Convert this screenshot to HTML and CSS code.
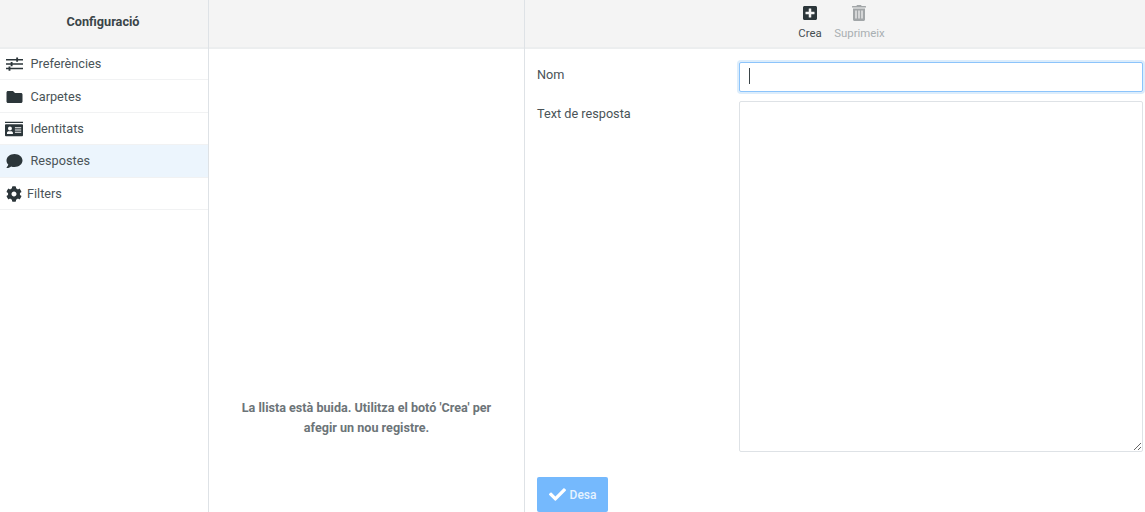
FILE: index.html
```html
<!DOCTYPE html>
<html lang="ca">
<head>
<meta charset="utf-8">
<title>Configuració</title>
<link rel="stylesheet" href="styles.css">
</head>
<body>
<div class="app">
  <aside class="col col-nav">
    <header class="head head-title">Configuració</header>
    <nav class="nav">
      <a class="nav-row"><svg class="ico" viewBox="0 0 20 16"><path d="M0 2h20v1.800H0zM0 7.200h20v1.800H0zM0 12.400h20v1.800H0z"/><path d="M12 0.400h2.200v5H12zM5.500 5.600h2.200v5H5.500zM3 10.800h2.200v5H3z"/></svg>Preferències</a>
      <a class="nav-row"><svg class="ico" viewBox="0 0 512 512"><path d="M464 128H272l-64-64H48C21.490 64 0 85.490 0 112v288c0 26.510 21.490 48 48 48h416c26.510 0 48-21.490 48-48V176c0-26.510-21.490-48-48-48z"/></svg>Carpetes</a>
      <a class="nav-row"><svg class="ico ico-id" viewBox="0 0 20 16"><path fill-rule="evenodd" d="M0 0h20v1.400H0zM1 2.600h18a1 1 0 0 1 1 1V15a1 1 0 0 1-1 1H1a1 1 0 0 1-1-1V3.600a1 1 0 0 1 1-1zM2.200 13.600h6.600v-1.300c0-1-1-1.700-2-1.700H4.200c-1 0-2 .7-2 1.700zM5.500 5.200a2.200 2.200 0 1 0 0 4.400 2.200 2.200 0 0 0 0-4.400zM11 6v1.200h7V6zM11 8.500v1.200h7V8.500zM11 11v1.200h7V11z"/></svg>Identitats</a>
      <a class="nav-row is-active"><svg class="ico" viewBox="0 0 512 512"><path d="M256 32C114.600 32 0 125.100 0 240c0 49.600 21.400 95 57 130.700C44.500 421.100 2.700 466 2.200 466.500c-2.200 2.300-2.800 5.700-1.500 8.700S4.800 480 8 480c66.300 0 116-31.800 140.600-51.400 32.700 12.300 69 19.400 107.400 19.400 141.400 0 256-93.100 256-208S397.400 32 256 32z"/></svg>Respostes</a>
      <a class="nav-row nav-row-tight"><svg class="ico ico-cog" viewBox="0 0 512 512"><path d="M487.400 315.700l-42.600-24.600c4.300-23.200 4.300-47 0-70.200l42.600-24.600c4.900-2.800 7.100-8.600 5.500-14-11.100-35.600-30-67.800-54.700-94.600-3.800-4.100-10-5.100-14.800-2.300L380.800 110c-17.900-15.400-38.500-27.300-60.800-35.100V25.800c0-5.600-3.900-10.500-9.400-11.700-36.700-8.200-74.300-7.800-109.200 0-5.500 1.200-9.400 6.100-9.400 11.700V75c-22.200 7.900-42.800 19.800-60.800 35.100L88.700 85.500c-4.900-2.800-11-1.900-14.800 2.300-24.700 26.700-43.600 58.900-54.700 94.600-1.700 5.400.6 11.200 5.500 14L67.300 221c-4.300 23.200-4.300 47 0 70.200l-42.600 24.600c-4.900 2.800-7.100 8.600-5.500 14 11.100 35.600 30 67.800 54.700 94.600 3.800 4.100 10 5.100 14.800 2.300l42.600-24.600c17.900 15.400 38.500 27.300 60.800 35.100v49.200c0 5.600 3.900 10.500 9.400 11.700 36.700 8.200 74.300 7.800 109.200 0 5.500-1.200 9.400-6.100 9.400-11.700v-49.200c22.200-7.900 42.800-19.800 60.800-35.100l42.600 24.600c4.900 2.800 11 1.900 14.800-2.300 24.700-26.700 43.600-58.900 54.700-94.600 1.500-5.500-.7-11.300-5.600-14.100zM256 336c-44.100 0-80-35.900-80-80s35.900-80 80-80 80 35.900 80 80-35.900 80-80 80z"/></svg>Filters</a>
    </nav>
  </aside>
  <section class="col col-list">
    <header class="head"></header>
    <div class="empty">La llista està buida. Utilitza el botó 'Crea' per afegir un nou registre.</div>
  </section>
  <main class="col col-form">
    <header class="head toolbar">
      <a class="tool"><svg class="tool-ico" viewBox="0 0 448 512"><path d="M400 32H48C21.500 32 0 53.500 0 80v352c0 26.500 21.500 48 48 48h352c26.500 0 48-21.500 48-48V80c0-26.500-21.500-48-48-48zm-32 252c0 6.600-5.400 12-12 12h-92v92c0 6.600-5.400 12-12 12h-56c-6.600 0-12-5.400-12-12v-92H92c-6.600 0-12-5.400-12-12v-56c0-6.600 5.400-12 12-12h92v-92c0-6.600 5.400-12 12-12h56c6.600 0 12 5.400 12 12v92h92c6.600 0 12 5.400 12 12v56z"/></svg><span>Crea</span></a>
      <a class="tool is-disabled"><svg class="tool-ico" viewBox="0 0 448 512"><path fill-rule="evenodd" d="M160 0h128l20 32h124c9 0 16 7 16 16v32H0V48c0-9 7-16 16-16h124zM32 112h384v352c0 26-22 48-48 48H80c-26 0-48-22-48-48zM108 176v256h40V176zM204 176v256h40V176zM300 176v256h40V176z"/></svg><span>Suprimeix</span></a>
    </header>
    <form class="form">
      <div class="field">
        <label class="label" for="nom">Nom</label>
        <div class="input-wrap">
          <input class="input is-focus" id="nom" type="text">
          <span class="caret"></span>
        </div>
      </div>
      <div class="field field-area">
        <label class="label" for="text">Text de resposta</label>
        <textarea class="input area" id="text"></textarea>
      </div>
      <button class="save" type="button"><svg class="save-ico" viewBox="0 0 512 512"><path d="M173.898 439.404l-166.400-166.400c-9.997-9.997-9.997-26.206 0-36.204l36.203-36.204c9.997-9.998 26.207-9.998 36.204 0L192 312.690 432.095 72.596c9.997-9.997 26.207-9.997 36.204 0l36.203 36.204c9.997 9.997 9.997 26.206 0 36.204l-294.400 294.401c-9.998 9.997-26.207 9.997-36.204-.001z"/></svg>Desa</button>
    </form>
  </main>
</div>
</body>
</html>
```
FILE: styles.css
```css
* { box-sizing: border-box; }
html, body { margin: 0; height: 100%; overflow: hidden; }
body { background: #fff; font: 12.700px/20px Roboto, sans-serif; color: #2c363a; }
.app { display: grid; grid-template-columns: 209px 316px 1fr; height: 512px; }
.col { display: flex; flex-direction: column; min-width: 0; height: 512px; border-right: 1px solid #dee2e6; }
.col-form { border-right: 0; }
.head { flex: none; height: 49px; background: #f4f4f4; border-bottom: 2px solid #eceeef; }
.head-title { display: flex; align-items: center; justify-content: center; padding: 0 2px 3px 0; font-weight: 700; color: #3a4448; }
.nav { display: flex; flex-direction: column; margin-top: -1px; }
.nav-row { display: flex; align-items: center; height: 32.400px; padding: 0.900px 0 0 6px; border-bottom: 1px solid #f1f2f3; color: #4a5357; }
.nav-row.is-active { background: #ecf5fd; }
.nav-row-tight .ico { margin-right: 5px; }
.ico { flex: none; width: 17px; height: 16px; margin-right: 7.500px; fill: #2c363a; }
.ico-id { width: 18px; margin-left: -1px; }
.ico-cog { width: 16px; margin-left: 0; }
.empty { margin-top: auto; padding: 0 20px 74px; text-align: center; font-weight: 700; font-size: 12.600px; line-height: 20px; color: #6c7478; }
.toolbar { display: flex; justify-content: center; gap: 12.500px; padding: 4px 0 0 13px; }
.tool { display: flex; flex-direction: column; align-items: center; font-size: 11.400px; line-height: 14px; color: #454e52; }
.tool-ico { width: 14px; height: 18px; margin-bottom: 4px; fill: #2c363a; }
.tool.is-disabled { color: #a9afb2; }
.tool.is-disabled .tool-ico { fill: #a2a6a8; }
.form { display: flex; flex-direction: column; flex: 1; padding: 13px 2px 0 12px; }
.field { display: grid; grid-template-columns: 202px 1fr; }
.field-area { margin-top: 9px; }
.label { padding-top: 3px; color: #4a5357; }
.input-wrap { position: relative; }
.input { display: block; width: 100%; height: 30px; margin: 0; padding: 4px 9px; border: 1px solid #dee2e6; border-radius: 2px; background: #fff; font: 13px/20px Roboto, sans-serif; color: #2c363a; outline: 0; }
.input.is-focus { border-color: #8cc4fb; box-shadow: 0 0 0 2px #dcedfc; }
.caret { position: absolute; left: 10px; top: 6px; width: 1px; height: 16px; background: #3a4448; }
.area { height: 351px; }
.save { display: flex; align-items: center; justify-content: center; align-self: flex-start; width: 71px; height: 35px; margin-top: 25px; padding: 0; border: 0; border-radius: 2px; background: #75b9fd; color: #e6f3ff; font: 500 12px/20px Roboto, sans-serif; }
.save-ico { width: 17px; height: 17px; margin-right: 4px; fill: #fff; }
```
